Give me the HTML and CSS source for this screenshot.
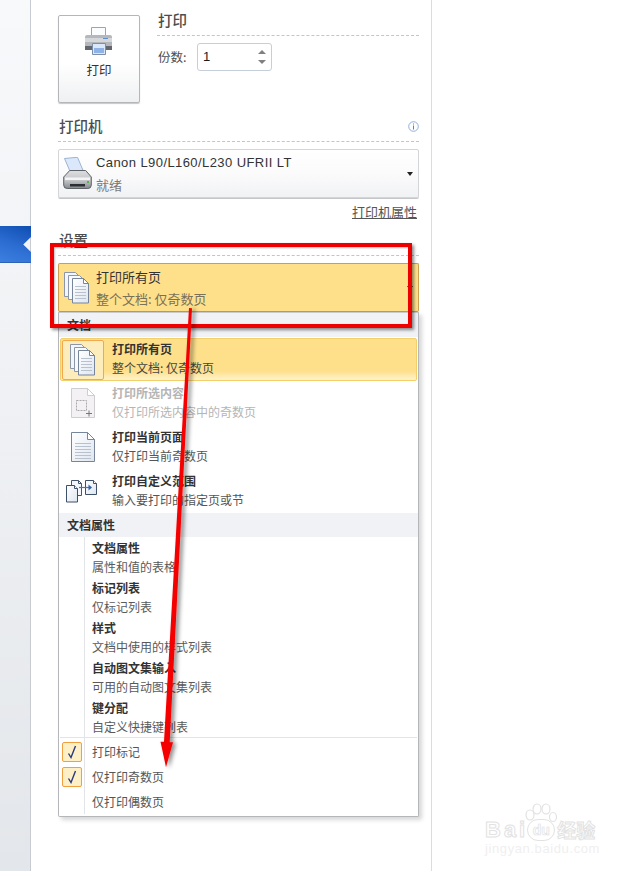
FILE: index.html
```html
<!DOCTYPE html>
<html lang="zh">
<head>
<meta charset="utf-8">
<title>打印</title>
<link rel="stylesheet" href="styles.css">
</head>
<body>
<svg class="defs" width="0" height="0">
  <defs>
    <linearGradient id="pg" x1="0" y1="0" x2="1" y2="1"><stop offset="0" stop-color="#fff"/><stop offset="1" stop-color="#dfe6f0"/></linearGradient>
    <linearGradient id="body" x1="0" y1="0" x2="0" y2="1"><stop offset="0" stop-color="#dcdee0"/><stop offset=".55" stop-color="#c3c6c9"/><stop offset="1" stop-color="#85888c"/></linearGradient>
    <symbol id="pages" viewBox="0 0 26 32">
      <path d="M.5.500h11l4 4v20H.5z" fill="#f2f5f9" stroke="#8b97a8"/>
      <path d="M4.500 3.500h11l4 4v20h-15z" fill="#f7f9fc" stroke="#8b97a8"/>
      <path d="M8.500 6.500h11l5 5v19.500h-16z" fill="url(#pg)" stroke="#76859a"/>
      <path d="M19.500 6.500v5h5z" fill="#fff" stroke="#76859a"/>
      <path d="M11 14.500h11M11 17.500h11M11 20.500h11M11 23.500h11M11 26.500h11" stroke="#b8c2cf"/>
    </symbol>
    <symbol id="page" viewBox="0 0 24 30">
      <path d="M.5.500h16l7 7v22H.5z" fill="url(#pg)" stroke="#76859a"/>
      <path d="M16.500.500v7h7z" fill="#fff" stroke="#76859a"/>
      <path d="M4 11.500h16M4 14.500h16M4 17.500h16M4 20.500h16M4 23.500h16M4 26.500h16" stroke="#b8c2cf"/>
    </symbol>
    <symbol id="tick" viewBox="0 0 10 14">
      <path d="M1.500 8.500l2.500 4L8.500 1" fill="none" stroke="#2a3a80" stroke-width="1.400"/>
    </symbol>
  </defs>
</svg>
<div class="window">
  <aside class="rail"><div class="tab"></div></aside>
  <main class="panel">
    <section class="print-row">
      <button class="print-btn">
        <svg class="print-ico" width="30" height="30" viewBox="0 0 30 30">
          <path d="M7.500 1.500h14v10h-14z" fill="#fbfcfe" stroke="#9aa5b2"/>
          <path d="M1 11q0-2 2-2h23q2 0 2 2v9H1z" fill="#b4b8bd"/>
          <path d="M1 12h27v4H1z" fill="#d5d7da"/>
          <path d="M1 20h27v4H1z" fill="#63676d"/>
          <path d="M8.500 17.500h13v11h-13z" fill="#dbe8fa" stroke="#7d8ea6"/>
          <path d="M10 22h10v5H10z" fill="#8fb3e6"/>
          <path d="M19 12h5v1h-5z" fill="#5b8fd0"/>
        </svg>
        <span>打印</span>
      </button>
      <div class="print-side">
        <h2 class="head side-head">打印</h2>
        <div class="copies">
          <label class="copies-label">份数:</label>
          <div class="spin"><span>1</span><i class="arrows"><b class="up"></b><b class="down"></b></i></div>
        </div>
      </div>
    </section>

    <div class="head-row printer-head">
      <h2 class="head">打印机</h2>
      <svg class="info" width="11" height="11" viewBox="0 0 11 11"><circle cx="5.500" cy="5.500" r="4.800" fill="#fff" stroke="#8fb0dc"/><path d="M5 2.500h1v1H5zM5 4.500h1v4H5z" fill="#5f7fa8"/></svg>
    </div>

    <div class="select printer-select">
      <svg class="select-ico" width="29" height="33" viewBox="0 0 29 33">
        <path d="M1.500 1.500l13-1.200 5.500 13-13 1z" fill="#dbe8fb" stroke="#9cb3d2"/>
        <path d="M.7 20l6-6.500h16l5.600 6.500v8q0 3.500-3.500 3.500H4.200q-3.500 0-3.500-3.500z" fill="url(#body)" stroke="#5f6266"/>
        <path d="M2 20.500h25v2.500H2z" fill="#f4f4f4"/>
        <path d="M7 27h15v2.500H7z" fill="#2c2f32"/>
        <path d="M24 24h2v2h-2z" fill="#58b04c"/>
      </svg>
      <div class="select-text">
        <div class="line-main latin">Canon L90/L160/L230 UFRII LT</div>
        <div class="line-sub">就绪</div>
      </div>
      <b class="caret"></b>
    </div>

    <a class="props">打印机属性</a>

    <div class="head-row settings-head"><h2 class="head">设置</h2></div>

    <div class="select select-on">
      <svg class="select-ico pages-ico" width="26" height="32"><use href="#pages"/></svg>
      <div class="select-text">
        <div class="line-main">打印所有页</div>
        <div class="line-sub">整个文档: 仅奇数页</div>
      </div>
      <b class="caret"></b>
    </div>

    <div class="menu">
      <div class="group">文档</div>
      <div class="item item-on">
        <span class="ico-box"><svg width="26" height="32"><use href="#pages"/></svg></span>
        <div><div class="it">打印所有页</div><div class="is">整个文档: 仅奇数页</div></div>
      </div>
      <div class="item item-off">
        <span class="ico-box"><svg width="24" height="30" viewBox="0 0 24 30">
          <path d="M.5.500h16l7 7v22H.5z" fill="#f3f1f4" stroke="#cfccd2"/>
          <path d="M16.500.500v7h7z" fill="#fff" stroke="#cfccd2"/>
          <path d="M5.500 12.500h10v10h-10z" fill="none" stroke="#a9a6ac" stroke-dasharray="2 1"/>
          <path d="M15 25.500h6M18 22.500v6" stroke="#77757a"/>
        </svg></span>
        <div><div class="it">打印所选内容</div><div class="is">仅打印所选内容中的奇数页</div></div>
      </div>
      <div class="item">
        <span class="ico-box"><svg width="24" height="30"><use href="#page"/></svg></span>
        <div><div class="it">打印当前页面</div><div class="is">仅打印当前奇数页</div></div>
      </div>
      <div class="item">
        <span class="ico-box"><svg class="range-ico" width="31" height="23" viewBox="0 0 31 23">
          <path d="M5.500.5h7l3 3v12h-10z" fill="#f4f7fb" stroke="#46566f"/>
          <path d="M12.500.5v3h3" fill="none" stroke="#46566f"/>
          <path d="M.5 5.500h8l3 3v13.500H.5z" fill="url(#pg)" stroke="#3e4f6a"/>
          <path d="M8.500 5.500v3h3" fill="#fff" stroke="#3e4f6a"/>
          <path d="M19.500.5h8l3 3v11h-11z" fill="url(#pg)" stroke="#3e4f6a"/>
          <path d="M27.500.5v3h3" fill="#fff" stroke="#3e4f6a"/>
          <path d="M13 7.500h11" stroke="#3f76c4" stroke-width="1.200"/>
          <path d="M22.500 4.500l3.500 3-3.500 3z" fill="#2f62b4"/>
        </svg></span>
        <div><div class="it">打印自定义范围</div><div class="is">输入要打印的指定页或节</div></div>
      </div>
      <div class="group">文档属性</div>
      <div class="gutter-list">
        <div class="sub"><div class="it">文档属性</div><div class="is">属性和值的表格</div></div>
        <div class="sub"><div class="it">标记列表</div><div class="is">仅标记列表</div></div>
        <div class="sub"><div class="it">样式</div><div class="is">文档中使用的样式列表</div></div>
        <div class="sub"><div class="it">自动图文集输入</div><div class="is">可用的自动图文集列表</div></div>
        <div class="sub"><div class="it">键分配</div><div class="is">自定义快捷键列表</div></div>
      </div>
      <div class="gutter-list checks">
        <div class="check-row"><span class="check"><svg width="10" height="14"><use href="#tick"/></svg></span><span>打印标记</span></div>
        <div class="check-row"><span class="check"><svg width="10" height="14"><use href="#tick"/></svg></span><span>仅打印奇数页</span></div>
        <div class="check-row"><span class="check check-none"></span><span>仅打印偶数页</span></div>
      </div>
    </div>
  </main>
</div>

<div class="red-box"></div>
<svg class="arrow" width="633" height="871" viewBox="0 0 633 871">
  <defs><filter id="sh" x="-50%" y="-5%" width="200%" height="110%"><feDropShadow dx="3" dy="1" stdDeviation="2" flood-color="#000" flood-opacity=".45"/></filter></defs>
  <path d="M189 308l3 .2-22.300 434 3.300 0-7 25-5.500-25.500 3.500 0z" fill="#f40000" filter="url(#sh)"/>
</svg>
<div class="mark">
  <svg class="paw" width="36" height="26" viewBox="0 0 36 26" fill="#fff" stroke="#e2e2e2" stroke-width="1.200">
    <ellipse cx="7" cy="12" rx="4" ry="5"/><ellipse cx="14" cy="6" rx="4" ry="5"/><ellipse cx="23" cy="6" rx="4" ry="5"/><ellipse cx="30" cy="14" rx="3.500" ry="4.500"/>
  </svg>
  <div class="mark-top"><span class="bai">Bai</span><span class="du">du</span><span class="jy">经验</span></div>
  <div class="mark-url">jingyan.baidu.com</div>
</div>
</body>
</html>
```

FILE: styles.css
```css
* { box-sizing: border-box; }
html, body { margin: 0; padding: 0; height: 100%; }
body {
  width: 633px;
  height: 871px;
  overflow: hidden;
  background: #fff;
  position: relative;
  font-family: "Noto Sans CJK SC", "Liberation Sans", sans-serif;
  font-size: 12px;
  color: #3c3c3c;
}
.defs { position: absolute; }
.window { display: flex; height: 871px; }

.rail {
  width: 31px;
  flex: none;
  padding-top: 226px;
  background: linear-gradient(180deg, #f8f9fb 0, #eef0f3 50%, #e3e6ea 100%);
  border-right: 1px solid #c8ccd2;
}
.tab {
  width: 31px;
  height: 37px;
  margin-right: -1px;
  background: linear-gradient(20deg, #3d80e0 0, #2a6bd0 50%, #0f4db0 100%);
  border-bottom: 1px solid #2f62b4;
  clip-path: polygon(0 0, 100% 0, 100% 30%, 75% 50%, 100% 70%, 100% 100%, 0 100%);
}

.panel {
  width: 401px;
  flex: none;
  height: 871px;
  padding: 15px 12px 0 27px;
  border-right: 1px solid #d9dce1;
  background: #fff;
}

.print-row { display: flex; height: 88px; }
.print-btn {
  width: 82px;
  height: 88px;
  flex: none;
  padding: 10px 0 0;
  display: flex;
  flex-direction: column;
  align-items: center;
  border: 1px solid #b4b6b9;
  border-radius: 2px;
  background: linear-gradient(180deg, #fff 0, #fff 55%, #eff0f2 100%);
  box-shadow: 0 1px 1px #c8c8c8;
  font: inherit;
  color: #333;
}
.print-btn span { font-size: 12.500px; line-height: 18px; margin-top: 5px; }
.print-ico { display: block; }

.print-side { margin-left: 17px; flex: 1; }
.head {
  margin: 0;
  font-size: 14.500px;
  line-height: 20px;
  font-weight: 500;
  color: #4d4d4d;
}
.side-head { padding: 0 0 5px 1px; margin-top: -5px; border-bottom: 1px dashed #c3c5c8; }
.copies { display: flex; align-items: center; margin-top: 7px; }
.copies-label { margin: 0 0 2px 1px; width: 39px; font-size: 12.500px; color: #4d4d4d; }
.spin {
  width: 75px;
  height: 28px;
  display: flex;
  justify-content: space-between;
  align-items: center;
  padding: 0 2px 2px 5px;
  border: 1px solid #c5ced9;
  border-radius: 3px;
  font-family: "Liberation Sans", sans-serif;
  font-size: 13px;
  color: #1a1a1a;
}
.arrows { display: flex; flex-direction: column; gap: 6px; margin: 2px 3px 0 0; }
.arrows b { width: 0; height: 0; border-left: 4px solid transparent; border-right: 4px solid transparent; }
.arrows .up { border-bottom: 4px solid #808080; }
.arrows .down { border-top: 4px solid #808080; }

.head-row {
  display: flex;
  justify-content: space-between;
  align-items: center;
  border-bottom: 1px dashed #c3c5c8;
  height: 24px;
  padding: 0 0 7px 1px;
}
.printer-head { margin-top: 15px; }
.settings-head { margin-top: 12px; }

.select {
  position: relative;
  height: 49px;
  display: flex;
  align-items: center;
  margin-top: 7px;
  padding-left: 4px;
  border: 1px solid #d3d5d8;
  border-radius: 2px;
  background: linear-gradient(180deg, #fff 0, #fbfbfc 50%, #f1f2f4 100%);
  box-shadow: 0 1px 0 #c4c6c9;
}
.select-ico { flex: none; }
.pages-ico { margin: 0 0 0 1px; }
.select-text { margin-left: 4px; line-height: 18px; padding-top: 1px; }
.pages-ico + .select-text { margin-left: 6px; }
.line-main { font-size: 13px; color: #333; line-height: 20px; }
.latin { letter-spacing: .42px; font-family: "Liberation Sans", sans-serif; }
.line-sub { font-size: 13px; color: #7b7b7b; line-height: 20px; margin-top: 2px; }
.caret {
  position: absolute;
  right: 5px;
  top: 22px;
  width: 0;
  height: 0;
  border-left: 3.500px solid transparent;
  border-right: 3.500px solid transparent;
  border-top: 4px solid #222;
}

.props {
  display: block;
  width: max-content;
  margin: 5px 2px 0 auto;
  font-size: 13px;
  line-height: 17px;
  color: #555;
  text-decoration: underline;
}

.select-on {
  background: #fee08b;
  border: 1px solid #c9a14e;
  border-bottom-color: #b89b52;
  box-shadow: none;
}
.select-on .line-sub { color: #7a7158; }

.menu {
  height: 505px;
  border: 1px solid #b4b6ba;
  border-top-color: #c8cacd;
  border-radius: 0 0 2px 2px;
  background: #fff;
  box-shadow: 3px 3px 4px rgba(0, 0, 0, .16);
}
.group {
  height: 24px;
  background: #f0f2f6;
  padding-left: 8px;
  line-height: 24px;
  font-size: 12px;
  font-weight: 700;
  color: #333;
}
.item {
  height: 44px;
  margin: 0 1px;
  display: flex;
  align-items: center;
}
.ico-box {
  width: 42px;
  height: 40px;
  margin-left: 2px;
  flex: none;
  display: flex;
  align-items: center;
  justify-content: center;
  border: 1px solid transparent;
}
.range-ico { margin-right: 4px; }
.item > div { margin: 0 0 3px 8px; }
.it { font-size: 12px; font-weight: 700; line-height: 19px; color: #333; }
.is { font-size: 12px; line-height: 19px; color: #555; }
.item-on {
  height: 43px;
  margin-top: 1px;
  border: 1px solid #f3cf6c;
  border-radius: 2px;
  background: linear-gradient(180deg, #fee08b 0, #fee08b 78%, #fff3cc 100%);
}
.item-on .ico-box {
  margin-left: 1px;
  background: #fdedbd;
  border-color: #f2a84e;
  border-radius: 2px;
}
.item-on .is { color: #444; }
.item-off .it, .item-off .is { color: #b5b5b5; }

.gutter-list { position: relative; margin: 0 1px; padding-left: 24px; }
.gutter-list::before {
  content: "";
  position: absolute;
  left: 24px;
  top: 0;
  bottom: 0;
  border-left: 1px solid #e2e4e8;
}
.sub { height: 40px; padding: 1px 0 0 8px; }
.sub .is { line-height: 20px; color: #5a5a5a; }
.checks {
  border-top: 1px solid #e2e4e8;
  padding-left: 0;
  padding-top: 1px;
}
.check-row { height: 25px; display: flex; align-items: center; font-size: 12px; color: #555; }
.check {
  width: 20px;
  height: 20px;
  margin: 0 10px 0 2px;
  flex: none;
  display: flex;
  align-items: center;
  justify-content: center;
  border: 1px solid #f0a040;
  border-radius: 2px;
  background: #fdf0c6;
}
.check-none { visibility: hidden; }

.red-box {
  position: absolute;
  left: 50px;
  top: 243px;
  width: 362px;
  height: 85px;
  border: 4px solid #ee0000;
  box-shadow: 2px 2px 3px rgba(0, 0, 0, .45), inset 1px 1px 2px rgba(0, 0, 0, .25);
}
.arrow { position: absolute; left: 0; top: 0; pointer-events: none; }

.mark { position: absolute; left: 484px; top: 803px; width: 140px; height: 60px; color: #fff; }
.paw { position: absolute; left: 39px; top: 0; }
.mark-top {
  position: absolute;
  left: 1px;
  top: 14px;
  display: flex;
  align-items: center;
  font-family: "Liberation Sans", sans-serif;
  font-size: 22px;
  line-height: 26px;
  font-weight: 700;
  color: #fff;
  -webkit-text-stroke: 1px #e2e2e2;
}
.bai { letter-spacing: 3px; }
.du {
  margin-left: -1px;
  width: 28px;
  height: 22px;
  border: 1px solid #e2e2e2;
  border-radius: 11px;
  font-size: 14px;
  line-height: 20px;
  text-align: center;
  -webkit-text-stroke: .7px #e2e2e2;
}
.jy { margin-left: 2px; font-family: "Noto Sans CJK SC", sans-serif; font-size: 19px; }
.mark-url {
  position: absolute;
  left: 1px;
  top: 38px;
  font-family: "Liberation Sans", sans-serif;
  font-size: 13px;
  line-height: 16px;
  letter-spacing: .6px;
  color: #efefef;
}
```
